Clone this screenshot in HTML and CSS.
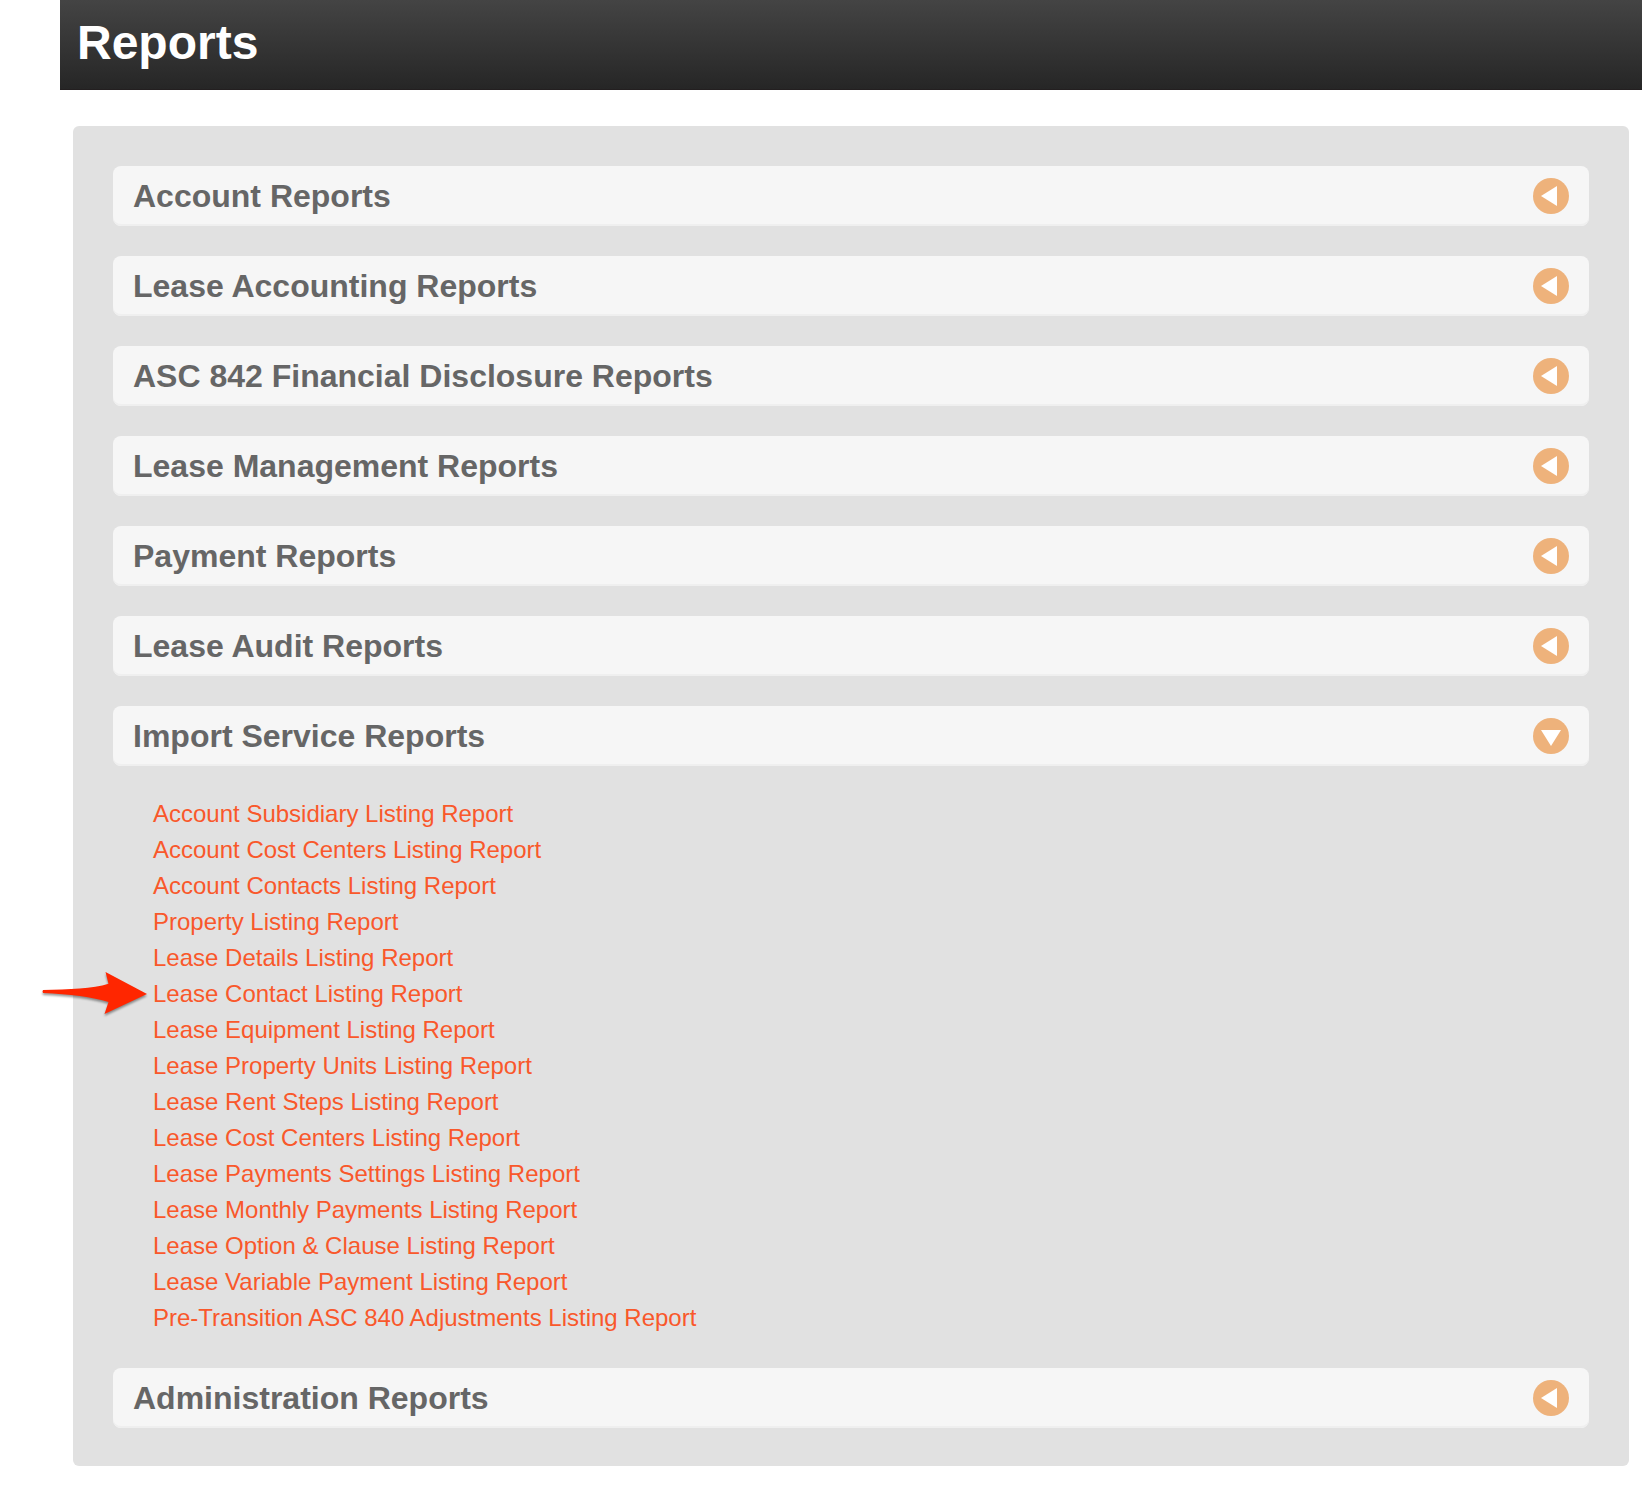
FILE: index.html
```html
<!DOCTYPE html>
<html lang="en">
<head>
    <meta charset="UTF-8">
    <meta name="viewport" content="width=device-width, initial-scale=1.0">
    <title>Reports</title>
    <link rel="stylesheet" href="styles.css">
</head>
<body>
    <svg class="sprite" aria-hidden="true">
        <symbol id="toggle" viewBox="0 0 36 36">
            <circle cx="18" cy="18" r="18" fill="#eeb27b"/>
            <path d="M8 18 24 8v20z" fill="#fff"/>
        </symbol>
    </svg>

    <header class="page-header">
        <h1>Reports</h1>
    </header>

    <main class="panel">
        <section>
            <h2><button class="bar" type="button" aria-expanded="false">Account Reports <svg class="icon" aria-hidden="true"><use href="#toggle"/></svg></button></h2>
        </section>
        <section>
            <h2><button class="bar" type="button" aria-expanded="false">Lease Accounting Reports <svg class="icon" aria-hidden="true"><use href="#toggle"/></svg></button></h2>
        </section>
        <section>
            <h2><button class="bar" type="button" aria-expanded="false">ASC 842 Financial Disclosure Reports <svg class="icon" aria-hidden="true"><use href="#toggle"/></svg></button></h2>
        </section>
        <section>
            <h2><button class="bar" type="button" aria-expanded="false">Lease Management Reports <svg class="icon" aria-hidden="true"><use href="#toggle"/></svg></button></h2>
        </section>
        <section>
            <h2><button class="bar" type="button" aria-expanded="false">Payment Reports <svg class="icon" aria-hidden="true"><use href="#toggle"/></svg></button></h2>
        </section>
        <section>
            <h2><button class="bar" type="button" aria-expanded="false">Lease Audit Reports <svg class="icon" aria-hidden="true"><use href="#toggle"/></svg></button></h2>
        </section>
        <section>
            <h2><button class="bar" type="button" aria-expanded="true" aria-controls="importReports">Import Service Reports <svg class="icon" aria-hidden="true"><use href="#toggle"/></svg></button></h2>
            <ul class="report-list" id="importReports">
                <li><a href="#">Account Subsidiary Listing Report</a></li>
                <li><a href="#">Account Cost Centers Listing Report</a></li>
                <li><a href="#">Account Contacts Listing Report</a></li>
                <li><a href="#">Property Listing Report</a></li>
                <li><a href="#">Lease Details Listing Report</a></li>
                <li class="marked">
                    <svg class="arrow" viewBox="0 0 112 50" aria-hidden="true">
                        <path d="M2 20C28 19 52 19 67.500 13.700L64.500 2 106 24 63.500 44 67.500 32C52 27 28 24 2 23Q1 21.500 2 20z" fill="#ff2600"/>
                    </svg>
                    <a href="#">Lease Contact Listing Report</a>
                </li>
                <li><a href="#">Lease Equipment Listing Report</a></li>
                <li><a href="#">Lease Property Units Listing Report</a></li>
                <li><a href="#">Lease Rent Steps Listing Report</a></li>
                <li><a href="#">Lease Cost Centers Listing Report</a></li>
                <li><a href="#">Lease Payments Settings Listing Report</a></li>
                <li><a href="#">Lease Monthly Payments Listing Report</a></li>
                <li><a href="#">Lease Option &amp; Clause Listing Report</a></li>
                <li><a href="#">Lease Variable Payment Listing Report</a></li>
                <li><a href="#">Pre-Transition ASC 840 Adjustments Listing Report</a></li>
            </ul>
        </section>
        <section>
            <h2><button class="bar" type="button" aria-expanded="false">Administration Reports <svg class="icon" aria-hidden="true"><use href="#toggle"/></svg></button></h2>
        </section>
    </main>

    <script>
        // open and close the sections
        document.querySelectorAll('.bar').forEach(function(bar) {
            bar.addEventListener('click', function() {
                const open = bar.getAttribute('aria-expanded') !== 'true';
                bar.setAttribute('aria-expanded', open);
                const list = document.getElementById(bar.getAttribute('aria-controls'));
                if (list) {
                    list.hidden = !open;
                }
            });
        });
    </script>
</body>
</html>
```
FILE: styles.css
```css
* {
    box-sizing: border-box;
}
body {
    margin: 0;
    padding: 0 0 20px 60px;
    background: #fff;
    font-family: Arial, "Liberation Sans", sans-serif;
}
h1, h2 {
    margin: 0;
}
.sprite {
    display: none;
}
.page-header {
    padding: 13px 17px 16px;
    background: linear-gradient(#444, #262626);
    border-bottom: 1px solid #231f20;
    color: #fff;
}
.page-header h1 {
    font-size: 48px;
    line-height: 60px;
}
.panel {
    display: flex;
    flex-direction: column;
    gap: 30px;
    margin: 36px 13px 0;
    padding: 40px 40px 38px;
    border-radius: 6px;
    background: #e1e1e1;
}
.bar {
    display: flex;
    align-items: center;
    justify-content: space-between;
    width: 100%;
    padding: 12px 20px;
    border: none;
    border-radius: 8px;
    background: #f6f6f6;
    box-shadow: inset 0 -2px 0 #efefef;
    color: #666;
    font-family: inherit;
    font-size: 32px;
    font-weight: bold;
    line-height: 36px;
    text-align: left;
    cursor: pointer;
}
.icon {
    flex: none;
    width: 36px;
    height: 36px;
}
.bar[aria-expanded="true"] .icon {
    transform: rotate(-90deg);
}
.report-list {
    margin: 0;
    padding: 30px 40px 2px;
    list-style: none;
    font-size: 24px;
    line-height: 36px;
}
.report-list a {
    color: #f9582b;
    text-decoration: none;
}
.report-list a:hover {
    text-decoration: underline;
}
.marked {
    position: relative;
}
/* red pointer lying over the panel edge */
.arrow {
    position: absolute;
    top: -6px;
    left: -112px;
    width: 112px;
    height: 50px;
    filter: drop-shadow(0 2px 1px rgba(0, 0, 0, 0.4));
}
```
